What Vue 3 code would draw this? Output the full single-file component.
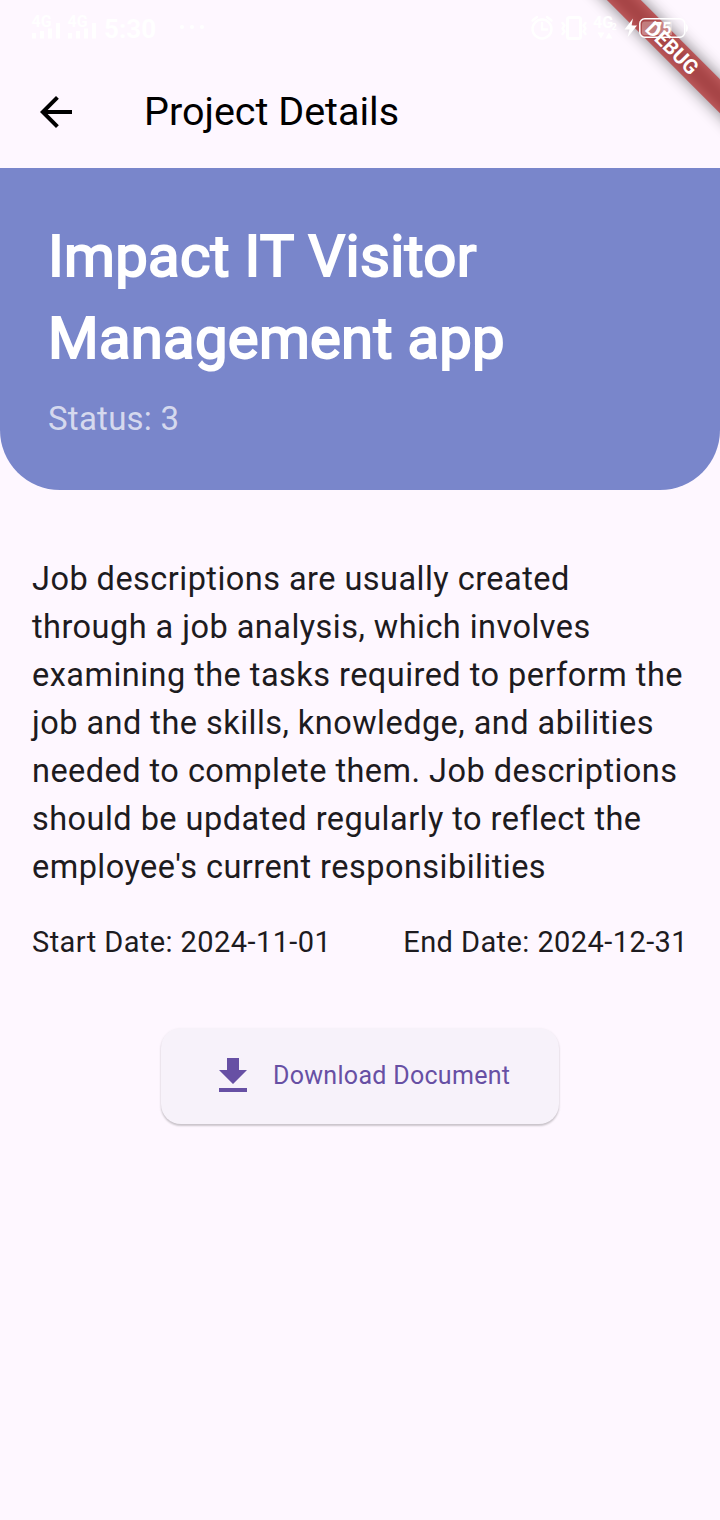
<script setup>
const description =
  "Job descriptions are usually created through a job analysis, which involves examining the tasks required to perform the job and the skills, knowledge, and abilities needed to complete them. Job descriptions should be updated regularly to reflect the employee's current responsibilities"
</script>

<template>
  <main class="screen">
    <div class="banner">
      <div class="banner-shadow"></div>
      <div class="banner-band">DEBUG</div>
    </div>

    <svg class="status-bar" width="720" height="56" viewBox="0 0 720 56" fill="#fff">
      <g class="net">
        <text x="31.500" y="27">4G</text>
        <text x="67.500" y="27">4G</text>
      </g>
      <path d="M32 33h4v5.500h-4zM40 31h4v7.500h-4zM48 28.500h4v10h-4zM56 23h4v15.500h-4z" />
      <path d="M68 33h4v5.500h-4zM76 31h4v7.500h-4zM84 28.500h4v10h-4zM92 23h4v15.500h-4z" />
      <text class="clock" x="104" y="38">5:30</text>
      <circle cx="182" cy="27" r="2" />
      <circle cx="192" cy="27" r="2" />
      <circle cx="202" cy="27" r="2" />
      <g fill="none" stroke="#fff" stroke-width="2.400" stroke-linecap="round" stroke-linejoin="round">
        <circle cx="542" cy="29" r="9.500" />
        <path d="M542 23v6.500h5M532.500 20.500l4.500-3.500M551.500 20.500l-4.500-3.500" />
        <rect x="567.500" y="17.500" width="13" height="21" rx="2" stroke-width="3" />
        <path d="M562.500 23l2 2.500-2 3 2 3-2 2.500M585.500 23l-2 2.500 2 3-2 3 2 2.500" />
      </g>
      <text class="data" x="593" y="28">4G</text>
      <text class="sub" x="611.500" y="29.500">2</text>
      <path d="M597.500 32.500h7l-3.500 6zM605.500 38.500h7l-3.500-6z" />
      <path d="M633 18.500l-8.500 11h5l-2 8 9.500-12h-5.500z" />
      <rect x="639.800" y="18.800" width="45" height="18.500" rx="5" fill="none" stroke="#fff" stroke-width="1.500" />
      <path d="M644.500 21.500H672v13.500h-27.500q-2.500 0-2.500-2.500v-8.500q0-2.500 2.500-2.500z" opacity=".3" />
      <path d="M686 24q2 1 2 4t-2 4z" />
      <text class="level" x="653" y="34">75</text>
    </svg>

    <header class="app-bar">
      <svg width="48" height="48" viewBox="0 0 24 24">
        <path d="M20 11H7.830l5.590-5.590L12 4l-8 8 8 8 1.410-1.410L7.830 13H20v-2z" />
      </svg>
      <h1>Project Details</h1>
    </header>

    <section class="hero">
      <h2>Impact IT Visitor Management app</h2>
      <p>Status: 3</p>
    </section>

    <section class="content">
      <p class="description">{{ description }}</p>
      <div class="dates">
        <span>Start Date: 2024-11-01</span>
        <span>End Date: 2024-12-31</span>
      </div>
      <button class="download">
        <svg width="48" height="48" viewBox="0 0 24 24" fill="#6750a4">
          <path d="M19 9h-4V3H9v6H5l7 7 7-7zM5 18v2h14v-2H5z" />
        </svg>
        <span>Download Document</span>
      </button>
    </section>
  </main>
</template>

<style>
body {
  background: #fef7ff;
}
</style>

<style scoped>
.screen {
  position: relative;
  width: 720px;
  height: 1520px;
  overflow: hidden;
  background: #fef7ff;
  color: #1d1b20;
  font-family: Roboto, sans-serif;
}
h1,
h2,
p {
  margin: 0;
  font-weight: 400;
}
.status-bar {
  position: relative;
  display: block;
}
.net text {
  font-size: 16px;
  font-weight: 700;
}
.clock {
  font-size: 26px;
  font-weight: 700;
}
.data {
  font-size: 16px;
  font-weight: 700;
}
.sub {
  font-size: 9px;
  font-weight: 700;
}
.level {
  font-size: 16px;
  font-weight: 700;
}
/* Corner ribbon, rotated around the top right corner of the screen */
.banner {
  position: absolute;
  top: 0;
  left: 560px;
  width: 320px;
  height: 80px;
  transform-origin: 160px 0;
  transform: rotate(45deg);
}
.banner-shadow,
.banner-band {
  position: absolute;
  top: 56px;
  left: 0;
  width: 320px;
  height: 24px;
}
.banner-shadow {
  background: rgba(0, 0, 0, 0.5);
  filter: blur(7.900px);
}
.banner-band {
  background: rgba(183, 28, 28, 0.627);
  color: #fff;
  font-size: 20.400px;
  font-weight: 700;
  line-height: 24px;
  text-align: center;
}
.app-bar {
  display: flex;
  align-items: center;
  gap: 64px;
  height: 112px;
  padding-left: 32px;
  color: #000;
}
.app-bar h1 {
  font-size: 39.500px;
  line-height: 52px;
}
.hero {
  box-sizing: border-box;
  height: 322px;
  padding: 47px 48px 0;
  border-radius: 0 0 60px 60px;
  background: #7986cb;
  color: #fff;
}
.hero h2 {
  width: 500px;
  font-size: 58px;
  line-height: 82px;
  letter-spacing: 0.300px;
  -webkit-text-stroke: 2px #fff;
}
.hero p {
  margin-top: 16px;
  font-size: 33px;
  line-height: 48px;
  letter-spacing: 0.250px;
  color: rgba(255, 255, 255, 0.7);
}
.content {
  display: flex;
  flex-direction: column;
  padding: 65px 32px 0;
}
.description {
  width: 656px;
  font-size: 32.500px;
  line-height: 48px;
  letter-spacing: 0.460px;
}
.dates {
  display: flex;
  justify-content: space-between;
  margin-top: 30px;
  font-size: 29px;
  line-height: 42px;
  letter-spacing: 0.420px;
}
.download {
  display: flex;
  align-items: center;
  align-self: center;
  gap: 16px;
  box-sizing: border-box;
  width: 398px;
  height: 96px;
  margin-top: 65px;
  padding: 0 0 0 48px;
  border: 0;
  border-radius: 20px;
  background: #f7f2fa;
  box-shadow: 0 2px 2px rgba(0, 0, 0, 0.17), 0 1px 3px rgba(0, 0, 0, 0.08);
  color: #6750a4;
  font-family: inherit;
  font-size: 25px;
  letter-spacing: 0.300px;
  white-space: nowrap;
}
.download span {
  padding-bottom: 2px;
}
</style>
